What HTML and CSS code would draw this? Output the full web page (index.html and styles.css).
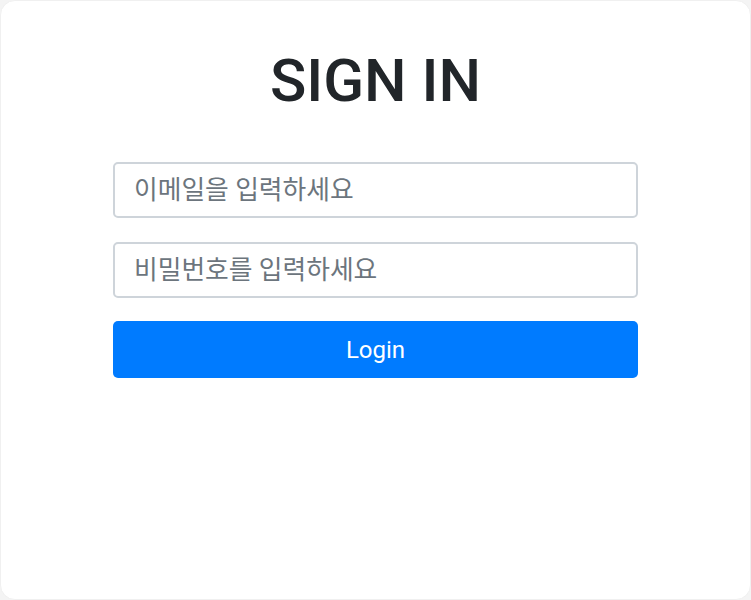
FILE: index.html
```html
<!DOCTYPE html>
<html lang="ko">
<head>
<meta charset="utf-8">
<title>Sign In</title>
<link rel="stylesheet" href="styles.css">
</head>
<body>
<div class="card">
  <h1 class="title">SIGN IN</h1>
  <form class="form">
    <input class="field" type="email" placeholder="이메일을 입력하세요">
    <input class="field" type="password" placeholder="비밀번호를 입력하세요">
    <button class="btn" type="button">Login</button>
  </form>
</div>
</body>
</html>
```
FILE: styles.css
```css
html, body {
  height: 100%;
}
body {
  margin: 0;
  background: #f4f4f4;
  font-family: Roboto, "Noto Sans CJK KR", sans-serif;
}
.card {
  box-sizing: border-box;
  height: 100%;
  background: #fff;
  border: 1px solid #f0f0f0;
  border-radius: 15px;
  padding-top: 44px;
  display: flex;
  flex-direction: column;
  align-items: center;
}
.title {
  margin: 0 0 45px;
  font-size: 60px;
  font-weight: 500;
  line-height: 1.2;
  color: #212529;
}
.form {
  width: 525px;
  display: flex;
  flex-direction: column;
}
.field {
  box-sizing: border-box;
  height: 56px;
  margin-bottom: 24px;
  padding: 0 19px;
  border: 2px solid #ced4da;
  border-radius: 5px;
  font-family: Roboto, "Noto Sans CJK KR", sans-serif;
  font-size: 25.75px;
  color: #495057;
  background: #fff;
  outline: none;
}
.field:nth-child(2) {
  margin-bottom: 23px;
}
.field::placeholder {
  color: #6c757d;
}
.btn {
  height: 57px;
  border: none;
  border-radius: 5px;
  background: #007bff;
  color: #fff;
  font-family: Roboto, sans-serif;
  font-size: 24px;
  cursor: pointer;
}
```
